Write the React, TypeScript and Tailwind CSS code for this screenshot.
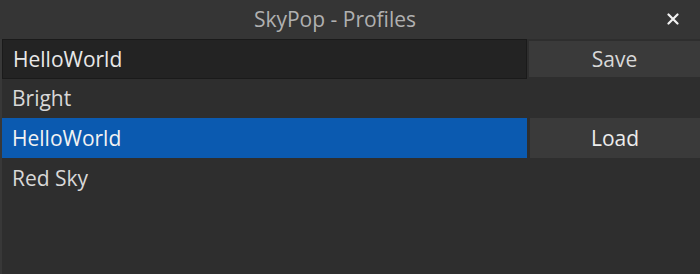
import React from "react";

const profiles = [
  { name: "Bright", h: "h-[39px]" },
  { name: "HelloWorld", h: "h-[40px]" },
  { name: "Red Sky", h: "h-[40px]" },
];

export default function App() {
  const selected = "HelloWorld";

  return (
    <div
      className="w-[700px] h-[274px] bg-[#2e2e2e] text-[#e6e6e6] flex flex-col overflow-hidden"
      style={{ fontFamily: "'Open Sans', Lato, sans-serif" }}
    >
      {/* title bar */}
      <div className="relative h-[39px] shrink-0 bg-[#353535] flex items-center justify-center">
        <span className="text-[21px] text-[#b0b0b0] ml-[-30px]">SkyPop - Profiles</span>
        <button className="absolute right-[17px] top-[9px] w-[20px] h-[20px] flex items-center justify-center">
          <svg width="12" height="12" viewBox="0 0 12 12">
            <path d="M1.5 1.5 L10.5 10.5 M10.5 1.5 L1.5 10.5" stroke="#f2f2f2" strokeWidth="2.2" strokeLinecap="round" />
          </svg>
        </button>
      </div>

      <div className="flex-1 flex flex-col border-l-2 border-[#383838]">
        {/* name input + save */}
        <div className="h-[40px] flex items-stretch">
          <div className="w-[525px] border border-[#1a1a1a] bg-[#232323] flex items-center pl-[10px] pt-[1px]">
            <span className="text-[21px] text-[#e8e8e8]">HelloWorld</span>
          </div>
          <button className="flex-1 ml-[2px] my-[2px] bg-[#3a3a3a] text-[21px] text-[#d8d8d8] flex items-center justify-center pt-[1px]">
            Save
          </button>
        </div>

        {/* profile list */}
        {profiles.map(({ name, h }) => {
          const isSel = name === selected;
          return (
            <div key={name} className={`${h} flex items-stretch`}>
              <div
                className={`w-[525px] flex items-center pl-[10px] pt-[1px] text-[21px] ${
                  isSel ? "bg-[#0b5ab0] text-[#f2f2f2]" : "text-[#d8d8d8]"
                }`}
              >
                {name}
              </div>
              {isSel && (
                <button className="flex-1 ml-[3px] bg-[#3a3a3a] text-[21px] text-[#ececec] flex items-center justify-center pt-[1px]">
                  Load
                </button>
              )}
            </div>
          );
        })}
      </div>
    </div>
  );
}
